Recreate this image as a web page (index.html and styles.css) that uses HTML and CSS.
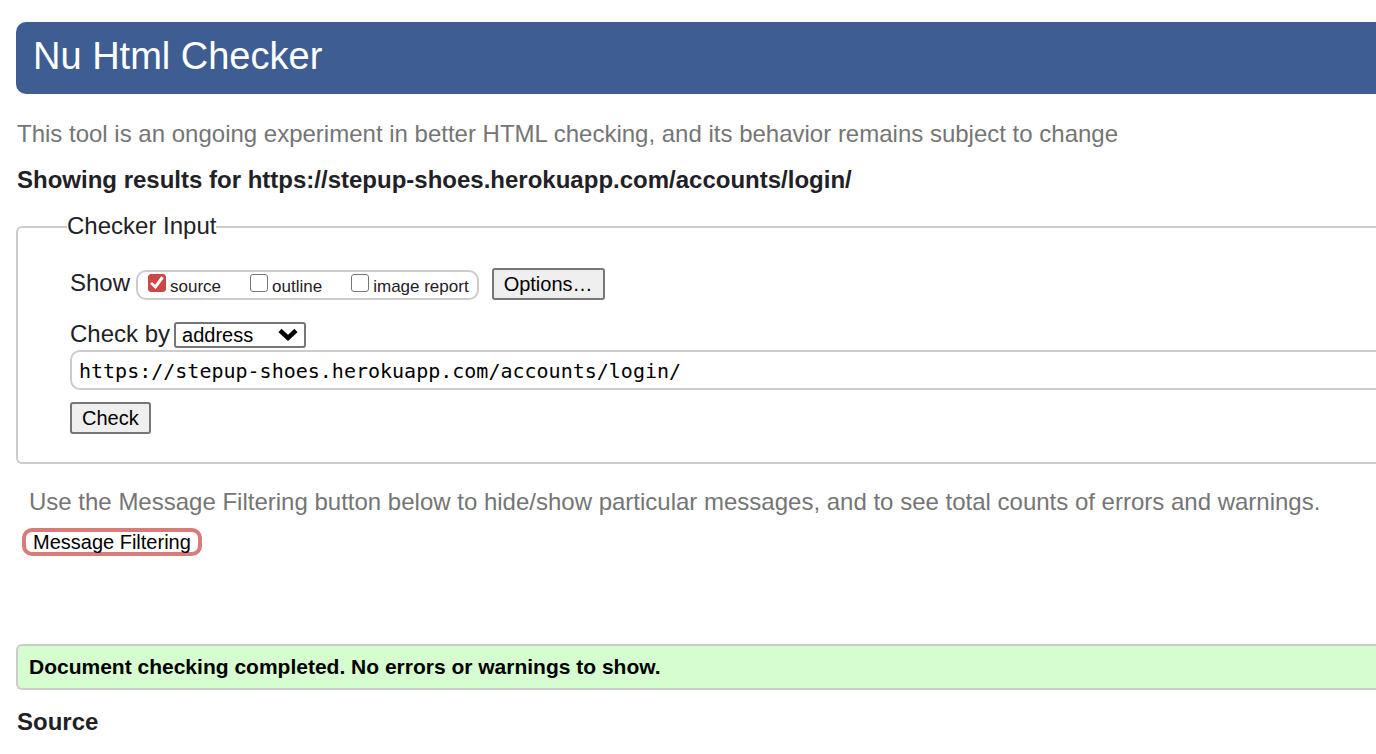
FILE: index.html
```html
<!DOCTYPE html>
<html lang="en">
<head>
<meta charset="utf-8">
<title>Nu Html Checker</title>
<link rel="stylesheet" href="styles.css">
</head>
<body>
<header class="banner"><h1 class="banner-title">Nu Html Checker</h1></header>
<main>
<p class="note">This tool is an ongoing experiment in better HTML checking, and its behavior remains subject to change</p>
<h2 class="heading">Showing results for https://stepup-shoes.herokuapp.com/accounts/login/</h2>
<form>
<fieldset class="checker">
<legend class="checker-legend">Checker Input</legend>
<div class="checker-body">
<div class="show-row">
<span class="row-label">Show</span>
<div class="show-options">
<label class="option"><input class="tick" type="checkbox" checked>source</label>
<label class="option"><input class="tick" type="checkbox">outline</label>
<label class="option"><input class="tick" type="checkbox">image report</label>
</div>
<button class="button" type="button">Options…</button>
</div>
<div class="method-row">
<label class="row-label" for="method">Check by</label>
<span class="select-wrap">
<select class="method" id="method"><option>address</option><option>file upload</option><option>text input</option></select>
<svg class="chevron" viewBox="0 0 20 14" aria-hidden="true"><path d="M2 2.500 10 10 18 2.500" fill="none" stroke="#000" stroke-width="4.500"/></svg>
</span>
</div>
<input class="address" type="text" aria-label="Address" value="https://stepup-shoes.herokuapp.com/accounts/login/">
<button class="button" type="button">Check</button>
</div>
</fieldset>
</form>
<section class="filtering">
<p class="filter-note">Use the Message Filtering button below to hide/show particular messages, and to see total counts of errors and warnings.</p>
<button class="filter-button" type="button">Message Filtering</button>
</section>
<p class="success">Document checking completed. No errors or warnings to show.</p>
<h2 class="heading">Source</h2>
</main>
</body>
</html>
```
FILE: styles.css
```css
* {
  box-sizing: border-box;
}

body {
  margin: 22px 0 0 16px;
  background: #fff;
  color: #1f2126;
  font: 24px/28px "Liberation Sans", Arial, sans-serif;
}

.banner {
  padding: 12px 17px 16px;
  border-radius: 10px 0 0 10px;
  background: #3e5e93;
}

.banner-title {
  margin: 0;
  color: #fff;
  font-size: 38px;
  font-weight: 400;
  line-height: 44px;
}

.note {
  margin: 26px 0 18px;
  padding-left: 1px;
  color: #757575;
}

.heading {
  margin: 0;
  padding-left: 1px;
  font-size: 24px;
  line-height: 28px;
}

.checker {
  min-width: 0;
  margin: 18px 0 0;
  padding: 26px 0 28px 49px;
  border: 2px solid #ccc;
  border-right: 0;
  border-radius: 6px 0 0 6px;
}

.checker-legend {
  padding: 0 0 2px;
}

.checker-body {
  display: flex;
  flex-direction: column;
  align-items: flex-start;
  padding-left: 3px;
}

.show-row {
  display: flex;
  align-items: flex-end;
}

.show-row .row-label {
  padding-bottom: 3px;
}

.show-options {
  display: flex;
  gap: 29px;
  height: 30px;
  margin: 0 13px 0 6px;
  padding: 0 8px 0 10px;
  border: 2px solid #ccc;
  border-radius: 10px;
}

.option {
  display: flex;
  align-items: flex-start;
  gap: 4px;
  font-size: 17px;
  line-height: 30px;
}

.tick {
  appearance: none;
  display: grid;
  width: 18px;
  height: 18px;
  margin: 2px 0 0;
  border: 1px solid #767676;
  border-radius: 3px;
  background: #fff;
}

.tick:checked {
  border-color: #cd4745;
  background: #cd4745;
}

.tick:checked::before {
  content: "";
  width: 14px;
  height: 14px;
  margin: 1px;
  background: #fff;
  clip-path: polygon(0 56%, 14% 42%, 36% 62%, 80% 2%, 98% 14%, 40% 94%);
}

.button {
  height: 32px;
  padding: 0 10px;
  border: 2px solid #767676;
  border-radius: 3px;
  background: #efefef;
  color: #000;
  font: 20px/24px "Liberation Sans", Arial, sans-serif;
}

.method-row {
  display: flex;
  gap: 4px;
  margin-top: 20px;
}

.select-wrap {
  display: grid;
  align-items: center;
  margin: 2px 0 0;
}

.method {
  grid-area: 1 / 1;
  appearance: none;
  width: 132px;
  height: 26px;
  padding: 0 6px;
  border: 2px solid #767676;
  border-radius: 3px;
  background: #fff;
  color: #000;
  font: 20px/22px "Liberation Sans", Arial, sans-serif;
}

.chevron {
  grid-area: 1 / 1;
  justify-self: end;
  width: 20px;
  height: 14px;
  margin-right: 8px;
  pointer-events: none;
}

.address {
  width: 100%;
  height: 40px;
  margin: 2px 0 12px;
  padding: 2px 7px 0;
  border: 2px solid #ccc;
  border-right: 0;
  border-radius: 10px 0 0 10px;
  color: #000;
  font: 20px/24px "DejaVu Sans Mono", monospace;
}

.filtering {
  padding: 24px 6px 88px;
}

.filter-note {
  margin: 0 0 12px;
  padding-left: 7px;
  color: #757575;
}

.filter-button {
  display: block;
  padding: 0 7px;
  border: 4px solid #d87b79;
  border-radius: 10px;
  background: #fff;
  color: #000;
  font: 20px/20px "Liberation Sans", Arial, sans-serif;
}

.success {
  margin: 0 0 18px;
  padding: 9px 11px;
  border: 2px solid #ccc;
  border-right: 0;
  border-radius: 6px 0 0 6px;
  background: #d5fdd0;
  color: #000;
  font-size: 21px;
  font-weight: 700;
  line-height: 24px;
}
```
